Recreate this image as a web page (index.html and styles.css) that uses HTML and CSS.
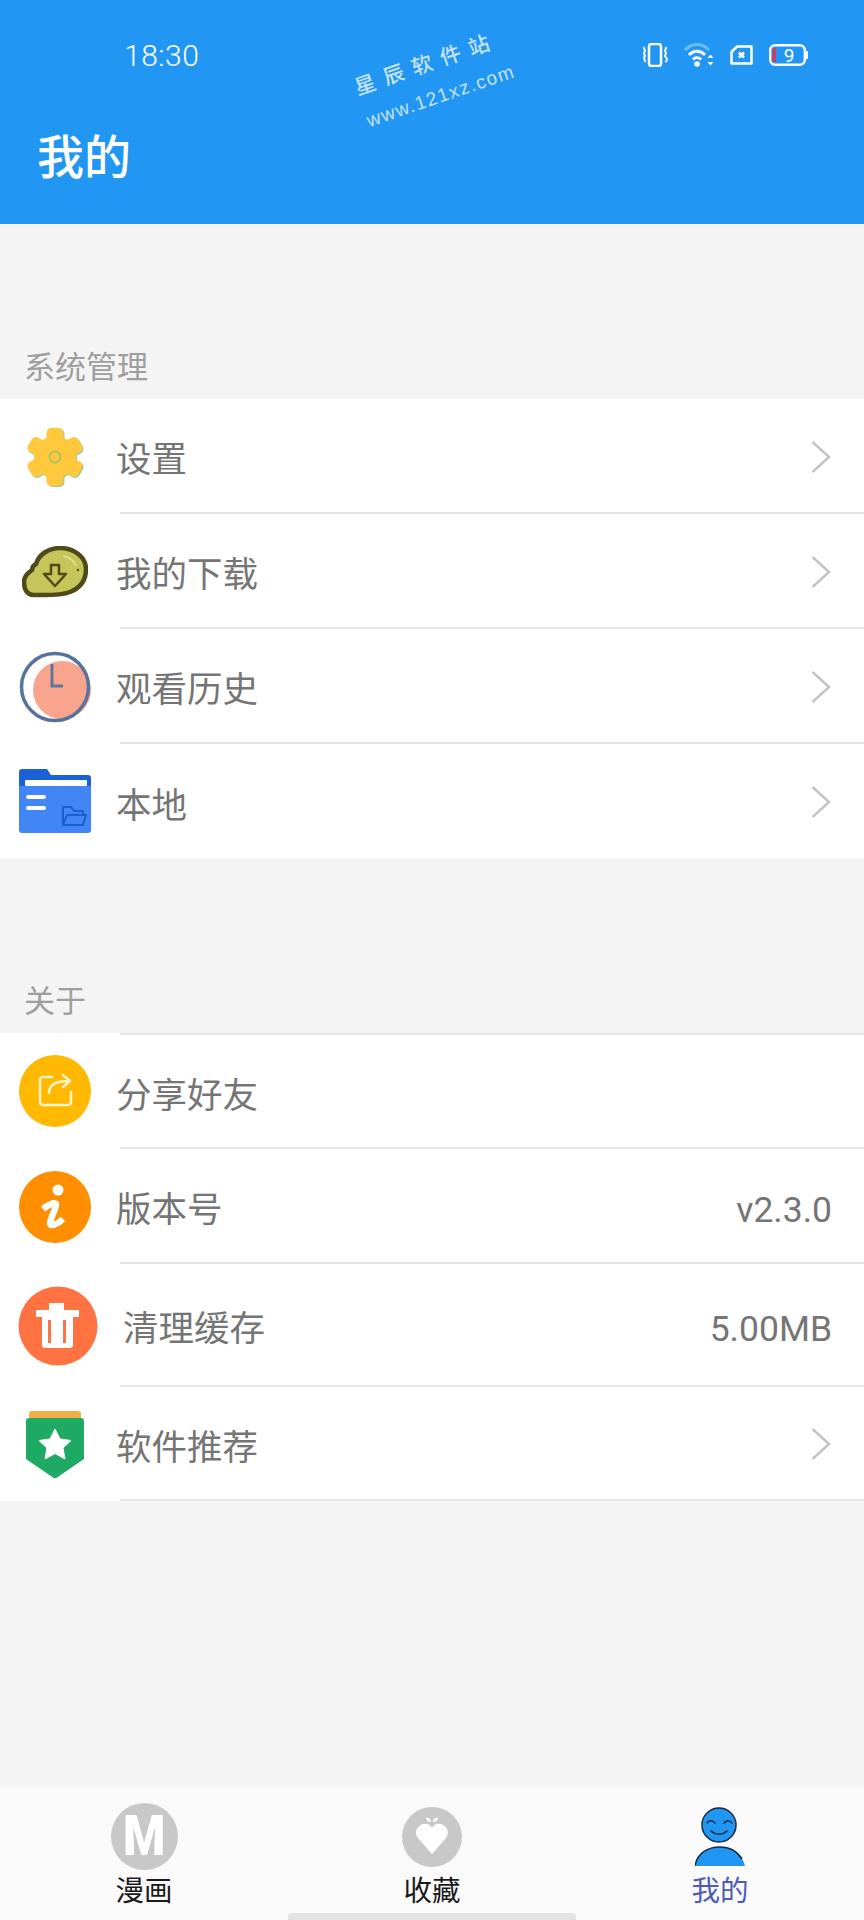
FILE: index.html
```html
<!DOCTYPE html>
<html lang="zh-CN">

<head>
    <meta charset="UTF-8">
    <meta name="viewport" content="width=device-width, initial-scale=1.0">
    <title>我的</title>
    <link rel="stylesheet" href="styles.css">
</head>

<body>
    <div id="page">
        <header id="header">
            <div id="statusBar">
                <span id="clock">18:30</span>
                <div id="statusIcons">
                    <svg width="26" height="24" viewBox="0 0 26 24" fill="none" stroke="#fff">
                        <rect x="7" y="1" width="12" height="22" rx="2.500" stroke-width="2.500"/>
                        <path d="M2.500 4c-2 2 2 3 0 5s2 3 0 5 2 3 0 5M23.500 4c2 2-2 3 0 5s-2 3 0 5 2 3 0 5" stroke-width="2"/>
                    </svg>
                    <svg width="30" height="24" viewBox="0 0 30 24" fill="none" stroke="#fff" stroke-width="3">
                        <path d="M1 7c7-7.500 17-7.500 24 0" stroke-opacity=".35"/>
                        <path d="M5 12c5-5 11-5 16 0"/>
                        <path d="M9 16.500c2.500-2.500 5.500-2.500 8 0"/>
                        <circle cx="13" cy="21" r="2.800" fill="#fff" stroke="none"/>
                        <path d="M23.500 15l3-3.500 3 3.500zM23.500 19l3 3.500 3-3.500z" fill="#fff" stroke="none"/>
                    </svg>
                    <svg width="23" height="20" viewBox="0 0 23 20" fill="none" stroke="#fff" stroke-width="2.500">
                        <path d="M7 1.500h14.500v17h-20V7z" stroke-linejoin="round"/>
                        <path d="M9 7.500l5 5M14 7.500l-5 5"/>
                    </svg>
                    <svg width="39" height="22" viewBox="0 0 39 22" fill="none">
                        <rect x="1.200" y="1.200" width="34.600" height="19.600" rx="5" stroke="#fff" stroke-width="2.400"/>
                        <path d="M38 7v8" stroke="#fff" stroke-width="2"/>
                        <rect x="3" y="4" width="4" height="14" fill="#c2436e"/>
                        <text x="20" y="17.500" class="battery-num">9</text>
                    </svg>
                </div>
            </div>
            <h1 id="title">我的</h1>
            <div id="watermark">
                <div class="mark-name">星辰软件站</div>
                <div class="mark-url">www.121xz.com</div>
            </div>
        </header>

        <main id="main">
            <h2 class="section-title">系统管理</h2>
            <section class="list">
                <div class="row">
                    <div class="row-icon">
                        <svg width="60" height="60" viewBox="0 0 60 60">
                            <g fill="#8fcf9f" transform="translate(1 1)">
                                <rect x="21.500" y="1" width="17" height="58" rx="5"/>
                                <rect x="21.500" y="1" width="17" height="58" rx="5" transform="rotate(60 30 30)"/>
                                <rect x="21.500" y="1" width="17" height="58" rx="5" transform="rotate(120 30 30)"/>
                                <circle cx="30" cy="30" r="21"/>
                            </g>
                            <g fill="#ffc83d">
                                <rect x="21.500" y="1" width="17" height="58" rx="5"/>
                                <rect x="21.500" y="1" width="17" height="58" rx="5" transform="rotate(60 30 30)"/>
                                <rect x="21.500" y="1" width="17" height="58" rx="5" transform="rotate(120 30 30)"/>
                                <circle cx="30" cy="30" r="21"/>
                            </g>
                            <circle cx="30" cy="30" r="5.500" fill="none" stroke="#9cc26a" stroke-width="1.500"/>
                        </svg>
                    </div>
                    <div class="row-body">
                        <span class="row-label">设置</span>
                        <svg class="arrow" width="20" height="32" viewBox="0 0 20 32"><path d="M.5 1L17 16 .5 31"/></svg>
                    </div>
                </div>
                <div class="row">
                    <div class="row-icon">
                        <svg width="66" height="52" viewBox="0 0 66 52">
                            <path d="M12 49C4 49 2 42 2 36c0-6 4-9 8-12 0-4 2-5 4-6C17 8 27 2 38 2c14 0 26 9 26 21 0 11-6 19-16 23-10 4-26 3-36 3z" fill="#c5c55a" stroke="#4f4a17" stroke-width="4.500"/>
                            <path d="M29 19h8v9h7L33 40 22 28h7z" fill="none" stroke="#4f4a17" stroke-width="2.500" stroke-linejoin="round"/>
                            <path d="M41 10c6 1 11 5 13 10" fill="none" stroke="#e3e39a" stroke-width="1.500"/>
                            <circle cx="56" cy="24" r="1.200" fill="#4f4a17"/>
                        </svg>
                    </div>
                    <div class="row-body">
                        <span class="row-label">我的下载</span>
                        <svg class="arrow" width="20" height="32" viewBox="0 0 20 32"><path d="M.5 1L17 16 .5 31"/></svg>
                    </div>
                </div>
                <div class="row">
                    <div class="row-icon">
                        <svg width="72" height="72" viewBox="0 0 72 72">
                            <circle cx="43" cy="39" r="29" fill="#f9a48d"/>
                            <circle cx="36" cy="36" r="33.500" fill="none" stroke="#56739f" stroke-width="3.500"/>
                            <path d="M33 13v22h11" fill="none" stroke="#5e769f" stroke-width="3"/>
                        </svg>
                    </div>
                    <div class="row-body">
                        <span class="row-label">观看历史</span>
                        <svg class="arrow" width="20" height="32" viewBox="0 0 20 32"><path d="M.5 1L17 16 .5 31"/></svg>
                    </div>
                </div>
                <div class="row row-short row-last">
                    <div class="row-icon">
                        <svg width="72" height="64" viewBox="0 0 72 64">
                            <path d="M0 3a3 3 0 0 1 3-3h25l4 6h37a3 3 0 0 1 3 3v14H0z" fill="#1a61d8"/>
                            <path d="M0 17h72v44a3 3 0 0 1-3 3H3a3 3 0 0 1-3-3z" fill="#4285f4"/>
                            <rect x="6" y="11" width="62" height="6" rx="1" fill="#fff"/>
                            <rect x="7" y="26" width="20" height="4" rx="2" fill="#fff"/>
                            <rect x="7" y="37" width="20" height="4" rx="2" fill="#fff"/>
                            <path d="M44 56V38h8l3 4h9v4M44 56l4-10h19l-3 10z" fill="none" stroke="#1a5fd0" stroke-width="2" stroke-linejoin="round"/>
                        </svg>
                    </div>
                    <div class="row-body">
                        <span class="row-label">本地</span>
                        <svg class="arrow" width="20" height="32" viewBox="0 0 20 32"><path d="M.5 1L17 16 .5 31"/></svg>
                    </div>
                </div>
            </section>

            <h2 class="section-title">关于</h2>
            <section class="list list-about">
                <div class="row">
                    <div class="row-icon">
                        <svg width="72" height="72" viewBox="0 0 72 72">
                            <circle cx="36" cy="36" r="36" fill="#ffb900"/>
                            <g fill="none" stroke="#fff3c4" stroke-width="2.500" stroke-linecap="round" stroke-linejoin="round">
                                <path d="M33 22h-9a3 3 0 0 0-3 3v22a3 3 0 0 0 3 3h25a3 3 0 0 0 3-3V37"/>
                                <path d="M30 38c0-8 6-12 20-12M44 20l7 6-7 6"/>
                            </g>
                        </svg>
                    </div>
                    <div class="row-body">
                        <span class="row-label">分享好友</span>
                    </div>
                </div>
                <div class="row">
                    <div class="row-icon">
                        <svg width="72" height="72" viewBox="0 0 72 72">
                            <circle cx="36" cy="36" r="36" fill="#ff8f00"/>
                            <circle cx="39" cy="19" r="5.500" fill="#fff"/>
                            <path d="M24 38c5-4 11-7 13-5 1 3-6 15-6 19 0 4 7 2 13-4" fill="none" stroke="#fff" stroke-width="6.500"/>
                        </svg>
                    </div>
                    <div class="row-body">
                        <span class="row-label">版本号</span>
                        <span class="row-value">v2.3.0</span>
                    </div>
                </div>
                <div class="row row-tall">
                    <div class="row-icon">
                        <svg width="80" height="80" viewBox="0 0 80 80">
                            <circle cx="40" cy="40" r="39.500" fill="#ff7241"/>
                            <path d="M31 17h15v7h15v7h-6v28a3 3 0 0 1-3 3H27a3 3 0 0 1-3-3V31h-6v-7h13z" fill="#fff"/>
                            <path d="M30 34h3v23h-3zM45 34h3v23h-3z" fill="#ff7241"/>
                        </svg>
                    </div>
                    <div class="row-body">
                        <span class="row-label row-label-far">清理缓存</span>
                        <span class="row-value">5.00MB</span>
                    </div>
                </div>
                <div class="row row-short">
                    <div class="row-icon">
                        <svg width="58" height="67" viewBox="0 0 58 67">
                            <path d="M3 3a3 3 0 0 1 3-3h46a3 3 0 0 1 3 3v6H3z" fill="#f2ad44"/>
                            <path d="M0 10a3 3 0 0 1 3-3h52a3 3 0 0 1 3 3v38L31 66.500a3 3 0 0 1-4 0L0 48z" fill="#1faa64"/>
                            <path d="M29 18l5 10 11 1.500-8 7.500 2 11-10-5.500L19 48l2-11-8-7.500L24 28z" fill="#fff" stroke="#fff" stroke-linejoin="round"/>
                        </svg>
                    </div>
                    <div class="row-body">
                        <span class="row-label">软件推荐</span>
                        <svg class="arrow" width="20" height="32" viewBox="0 0 20 32"><path d="M.5 1L17 16 .5 31"/></svg>
                    </div>
                </div>
            </section>
        </main>

        <nav id="tabBar">
            <div class="tab">
                <div class="tab-icon">
                    <div class="tab-m"><span>M</span></div>
                </div>
                <span class="tab-text">漫画</span>
            </div>
            <div class="tab">
                <div class="tab-icon">
                    <svg width="60" height="60" viewBox="0 0 60 60">
                        <circle cx="30" cy="30" r="30" fill="#c8c8c8"/>
                        <path d="M30 47L16 31c-5-7 1-15 8-14 3 0 5 2 6 4 1-2 3-4 6-4 7-1 13 7 8 14z" fill="#fff"/>
                        <path d="M29 15c-3 0-5-2-5-4 3-1 5 1 5 4zM31 15c0-3 2-5 5-4 0 2-2 4-5 4z" fill="#fff"/>
                    </svg>
                </div>
                <span class="tab-text">收藏</span>
            </div>
            <div class="tab tab-on">
                <div class="tab-icon">
                    <svg width="50" height="60" viewBox="0 0 50 60">
                        <circle cx="24" cy="18" r="17" fill="#2196f3" stroke="#1a2a44" stroke-width="1.500"/>
                        <g fill="none" stroke="#1a2a44" stroke-width="1.500" stroke-linecap="round">
                            <path d="M12 16c2-3 6-3 8 0M29 16c2-3 6-3 8 0"/>
                            <path d="M16 24c4 4 12 4 16 0"/>
                        </g>
                        <path d="M0 59c2-13 13-19 25-19s22 7 25 19z" fill="#2196f3"/>
                        <path d="M0 59c2-13 13-19 25-19 9 0 17 4 22 12" fill="none" stroke="#1a2a44" stroke-width="1.500"/>
                    </svg>
                </div>
                <span class="tab-text">我的</span>
            </div>
            <div id="homeBar"></div>
        </nav>
    </div>
</body>

</html>
```

FILE: styles.css
```css
* {
    box-sizing: border-box;
    font-family: Roboto, "Noto Sans CJK SC", sans-serif;
}

body {
    margin: 0;
    background: #f4f4f4;
}

#page {
    display: flex;
    flex-direction: column;
    width: 864px;
    height: 1920px;
    overflow: hidden;
}

/* top blue bar */
#header {
    position: relative;
    height: 224px;
    flex-shrink: 0;
    padding-top: 40px;
    background: #2196f3;
}

#statusBar {
    display: flex;
    justify-content: space-between;
    align-items: center;
    height: 30px;
    padding: 0 56px 0 124px;
}

#clock {
    color: #fff;
    font-size: 30px;
    font-weight: 300;
    letter-spacing: 0.5px;
}

#statusIcons {
    display: flex;
    align-items: center;
    gap: 16px;
}

.battery-num {
    fill: #fff;
    font-size: 19px;
    font-weight: 400;
    text-anchor: middle;
}

#title {
    margin: 57px 0 0 37px;
    color: #fff;
    font-size: 47px;
    font-weight: 500;
    line-height: 62px;
}

#watermark {
    position: absolute;
    left: 338px;
    top: 48px;
    width: 190px;
    text-align: center;
    color: rgba(255, 255, 255, 0.75);
    transform: rotate(-19deg);
}

.mark-name {
    font-size: 21px;
    font-weight: 500;
    line-height: 30px;
    letter-spacing: 9px;
}

.mark-url {
    padding-left: 6px;
    font-family: "Liberation Sans", sans-serif;
    font-size: 19px;
    line-height: 40px;
    letter-spacing: 1.4px;
    white-space: nowrap;
}

#main {
    flex: 1;
}

.section-title {
    display: flex;
    align-items: flex-end;
    height: 175px;
    margin: 0;
    padding: 0 0 11px 24px;
    color: #9e9e9e;
    font-size: 31px;
    font-weight: 400;
    line-height: 40px;
}

.list {
    background: #fff;
}

.row {
    display: flex;
    height: 115px;
}

.row-short {
    height: 114px;
}

.row-tall {
    height: 123px;
}

.row-icon {
    display: flex;
    justify-content: center;
    align-items: center;
    width: 120px;
    flex-shrink: 0;
    padding-right: 10px;
}

.row-tall .row-icon {
    padding-right: 4px;
}

.row-body {
    flex: 1;
    display: flex;
    justify-content: space-between;
    align-items: center;
    padding-right: 32px;
    border-bottom: 2px solid #e6e6e6;
}

.row-last .row-body {
    border-bottom: 0;
}

.list-about .row:first-child {
    height: 116px;
}

.list-about .row:first-child .row-body {
    border-top: 2px solid #e6e6e6;
}

.row-label {
    margin: 2px 0 0 -4px;
    color: #757575;
    font-size: 35.5px;
}

.row-label-far {
    margin-left: 3px;
}

.row-value {
    margin-top: 8px;
    color: #757575;
    font-size: 35.5px;
}

.arrow {
    margin-top: 2px;
    fill: none;
    stroke: #c4c4c4;
    stroke-width: 2.500;
}

/* bottom tabs */
#tabBar {
    position: relative;
    display: grid;
    grid-template-columns: repeat(3, 1fr);
    height: 133px;
    flex-shrink: 0;
    background: #fafafa;
}

.tab {
    display: flex;
    flex-direction: column;
    align-items: center;
}

.tab-icon {
    display: flex;
    justify-content: center;
    align-items: center;
    height: 67px;
    margin-top: 16px;
}

.tab-m {
    display: flex;
    justify-content: center;
    align-items: center;
    width: 67px;
    height: 67px;
    border-radius: 50%;
    background: #c8c8c8;
}

.tab-m span {
    color: #fff;
    font-size: 55px;
    font-weight: 900;
    line-height: 67px;
    transform: scaleX(0.88);
}

.tab-text {
    margin-top: 3px;
    color: #1a1a1a;
    font-size: 28.5px;
    line-height: 38px;
}

.tab-on .tab-text {
    color: #4f5bb5;
}

#homeBar {
    position: absolute;
    left: 288px;
    bottom: 0;
    width: 288px;
    height: 7px;
    border-radius: 4px 4px 0 0;
    background: #e3e3e3;
}
```
